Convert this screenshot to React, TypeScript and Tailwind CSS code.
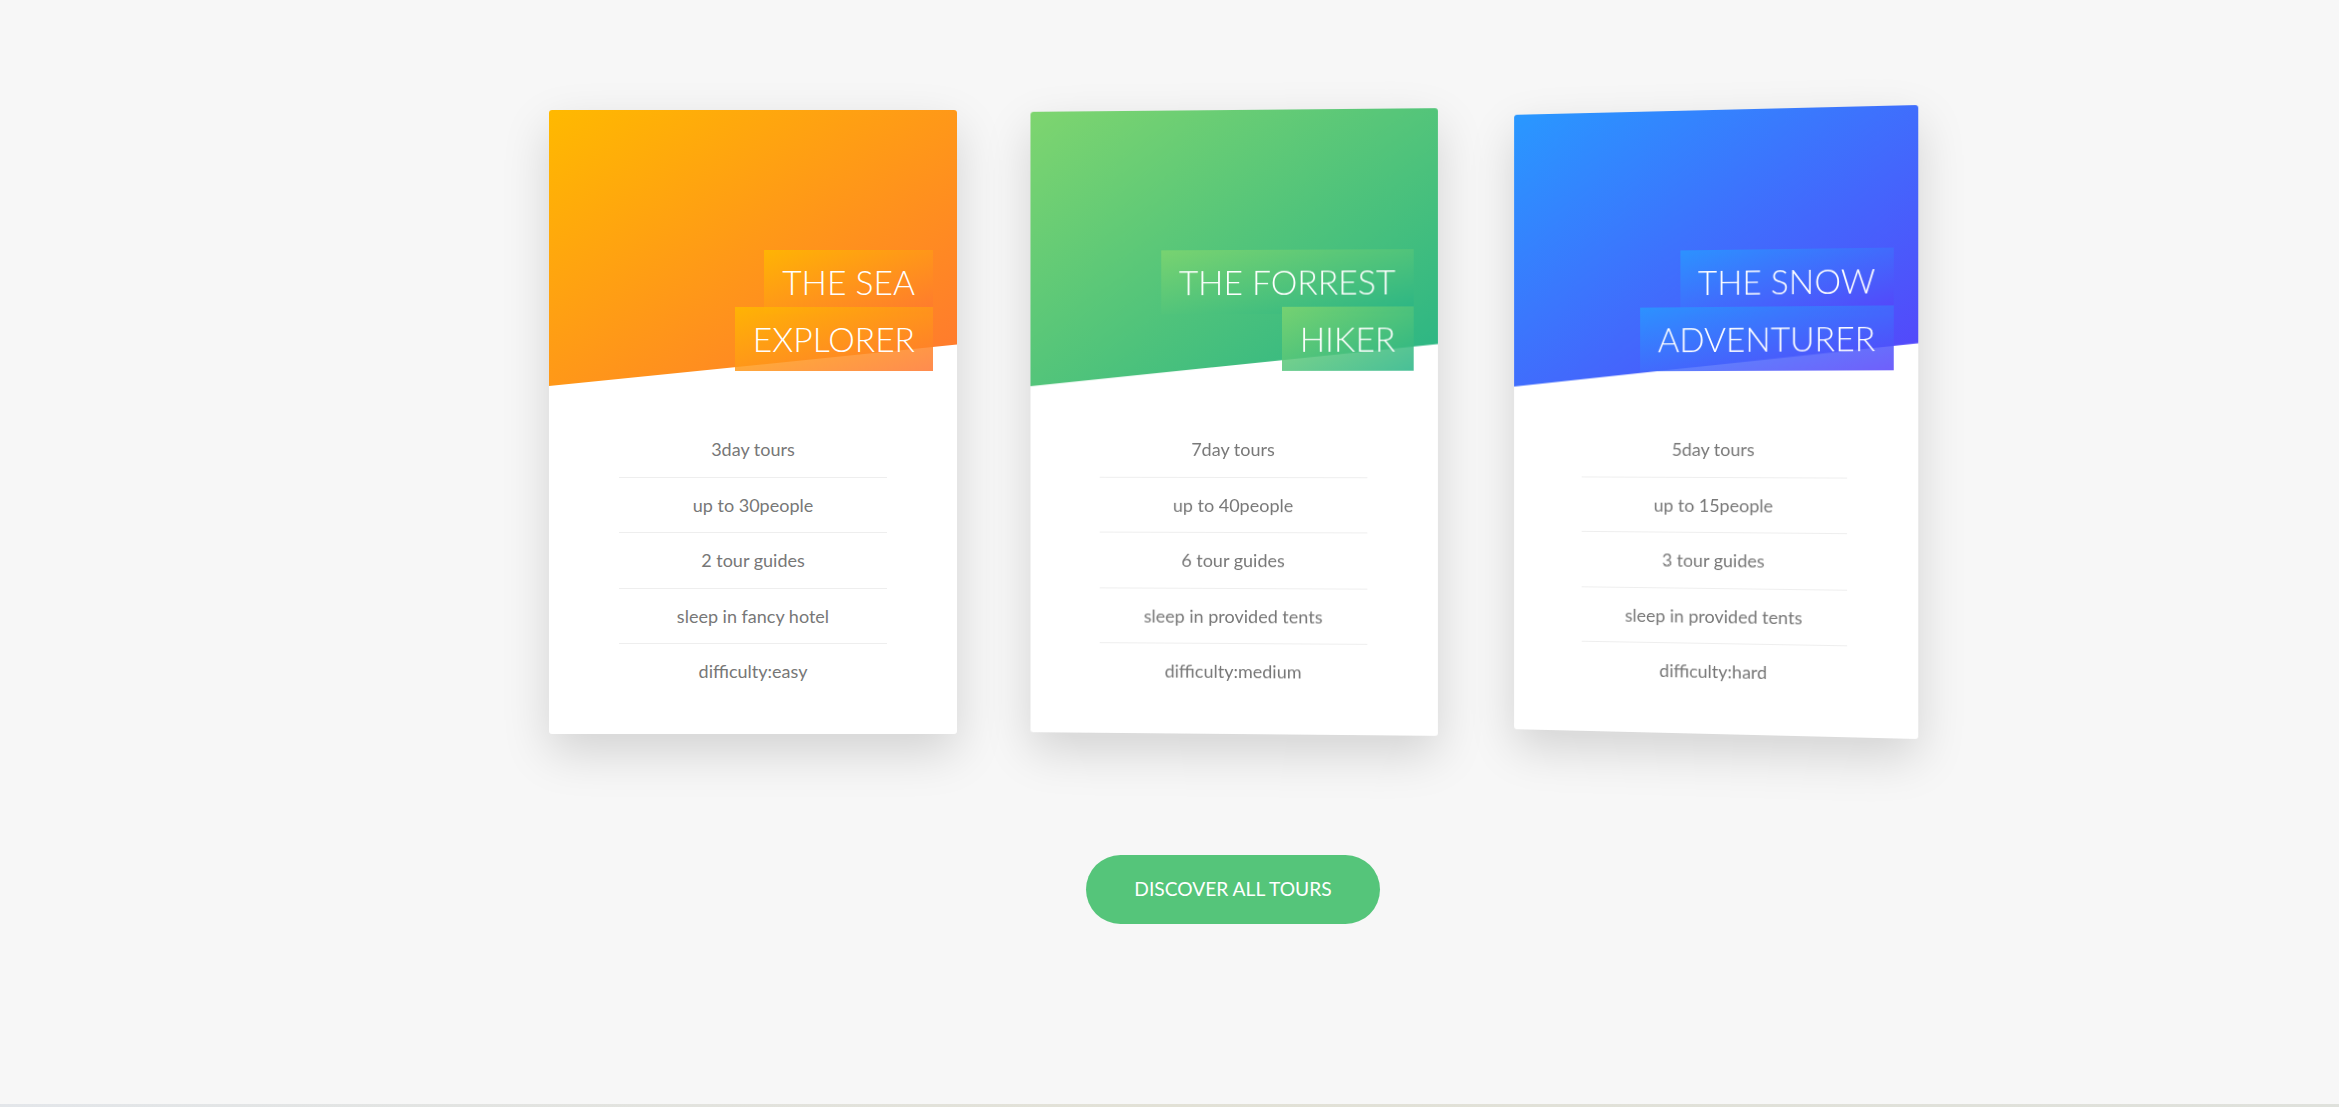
import React from "react";

type Tour = {
    title: [string, string];
    tilt: string;
    picture: string;
    heading: string;
    details: string[];
};

const tours: Tour[] = [
    {
        title: ["The Sea", "Explorer"],
        tilt: "",
        picture: "from-[#ffb900] to-[#ff7730]",
        heading: "from-[#ffb900]/85 to-[#ff7730]/85",
        details: ["3day tours", "up to 30people", "2 tour guides", "sleep in fancy hotel", "difficulty:easy"],
    },
    {
        title: ["The Forrest", "Hiker"],
        tilt: "-rotate-y-3",
        picture: "from-[#7ed56f] to-[#28b485]",
        heading: "from-[#7ed56f]/85 to-[#28b485]/85",
        details: ["7day tours", "up to 40people", "6 tour guides", "sleep in provided tents", "difficulty:medium"],
    },
    {
        title: ["The Snow", "Adventurer"],
        tilt: "-rotate-y-8",
        picture: "from-[#2998ff] to-[#5643fa]",
        heading: "from-[#2998ff]/85 to-[#5643fa]/85",
        details: ["5day tours", "up to 15people", "3 tour guides", "sleep in provided tents", "difficulty:hard"],
    },
];

function TourCard({ tour }: { tour: Tour }) {
    return (
        // card wrapper gives the 3d perspective
        <div className="perspective-[1800px] w-[408px] h-[624px] shrink-0">
            <div className={`relative h-full bg-white rounded-[3px] overflow-hidden shadow-[0_18px_48px_rgba(0,0,0,0.15)] ${tour.tilt}`}>
                {/* picture */}
                <div className={`h-[276px] bg-linear-to-br/srgb ${tour.picture} [clip-path:polygon(0_0,100%_0,100%_85%,0_100%)]`}></div>

                {/* heading */}
                <h4 className="absolute top-[144px] right-[24px] w-3/4 text-right text-[33.6px] font-light uppercase text-white leading-[1.7]">
                    <span className={`px-[18px] py-[12px] box-decoration-clone [-webkit-box-decoration-break:clone] bg-linear-to-br/srgb ${tour.heading}`}>
                        {tour.title[0]}
                        <br />
                        {tour.title[1]}
                    </span>
                </h4>

                {/* details */}
                <div className="p-[36px]">
                    <ul className="w-4/5 mx-auto">
                        {tour.details.map((d) => (
                            <li key={d} className="text-center text-[18px] leading-[1.7] py-[12px] border-b border-[#eee] last:border-b-0">
                                {d}
                            </li>
                        ))}
                    </ul>
                </div>
            </div>
        </div>
    );
}

export default function App() {
    return (
        <div className="w-full min-h-screen bg-[#f7f7f7] font-[Lato,sans-serif] text-[#777] overflow-hidden">
            <div className="h-[1104px] pt-[110px]">
                {/* cards row */}
                <div className="flex gap-[72px] ml-[549px]">
                    {tours.map((t) => (
                        <TourCard key={t.title[0]} tour={t} />
                    ))}
                </div>

                {/* button */}
                <div className="w-[1368px] ml-[549px] mt-[121px] flex justify-center">
                    <a className="inline-block bg-[#55c57a] text-white uppercase text-[19.2px] leading-[1.7] px-[48px] py-[18px] rounded-full">
                        Discover all tours
                    </a>
                </div>
            </div>

            {/* top of next section */}
            <div className="h-[3px] bg-linear-to-r from-[#e3e6ea] via-[#e2e1d6] to-[#dfe1dc]"></div>
        </div>
    );
}
